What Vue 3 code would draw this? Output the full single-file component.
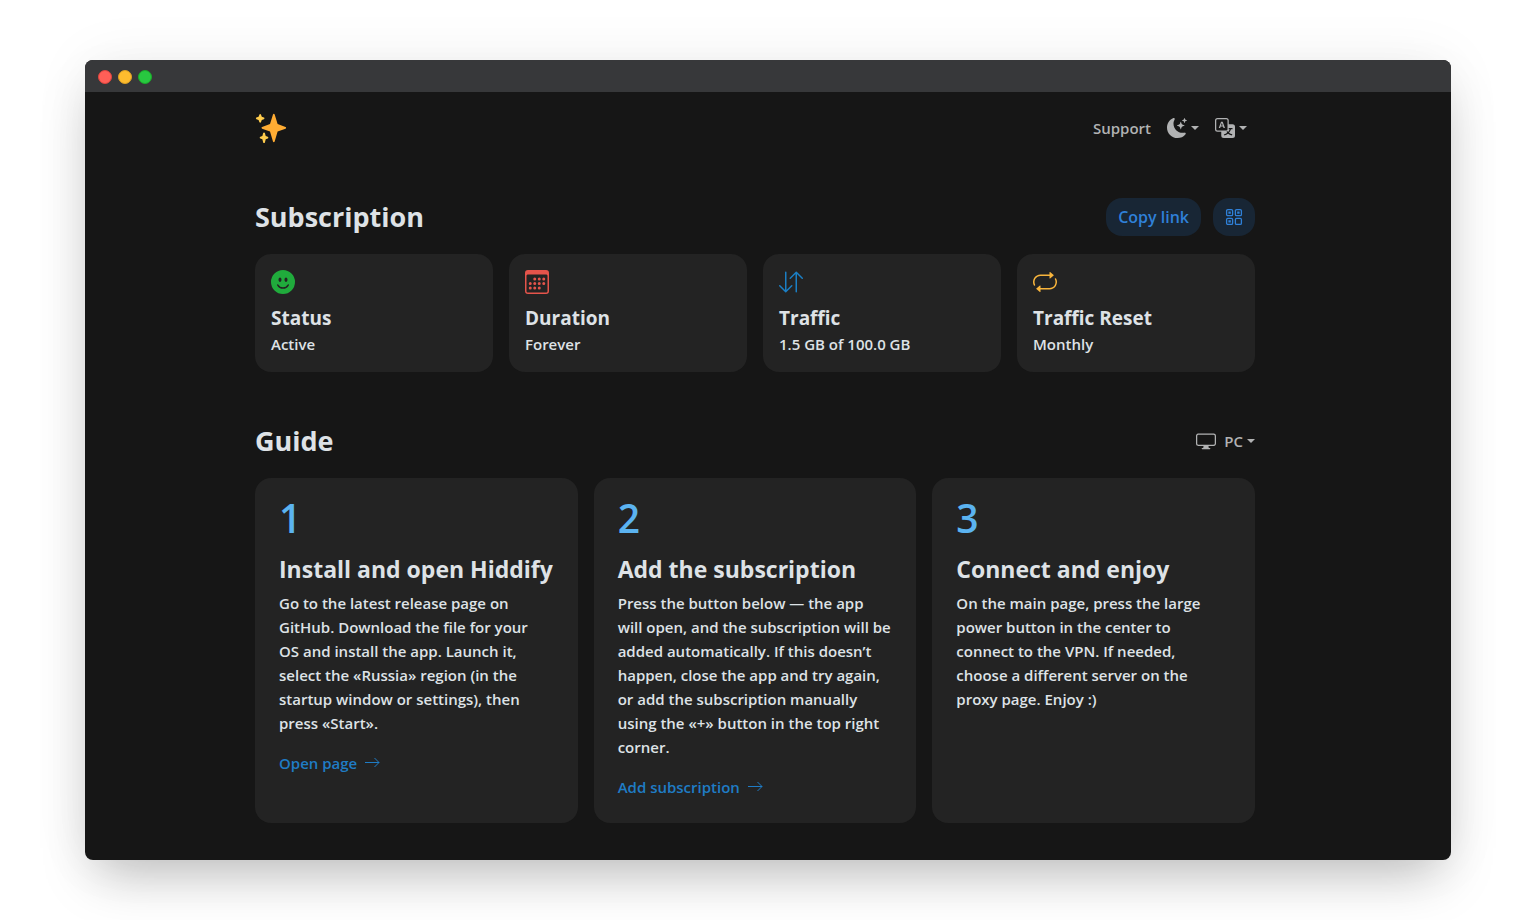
<script setup>
const stats = [
  {
    title: 'Status',
    value: 'Active',
    tone: 'green',
    paths: [
      'M8 16A8 8 0 1 0 8 0a8 8 0 0 0 0 16M7 6.5C7 7.328 6.552 8 6 8s-1-.672-1-1.5S5.448 5 6 5s1 .672 1 1.5M4.285 9.567a.5.5 0 0 1 .683.183A3.5 3.5 0 0 0 8 11.5a3.5 3.5 0 0 0 3.032-1.75.5.5 0 1 1 .866.5A4.5 4.5 0 0 1 8 12.5a4.5 4.5 0 0 1-3.898-2.25.5.5 0 0 1 .183-.683M10 8c-.552 0-1-.672-1-1.5S9.448 5 10 5s1 .672 1 1.5S10.552 8 10 8',
    ],
  },
  {
    title: 'Duration',
    value: 'Forever',
    tone: 'red',
    paths: [
      'M14 0H2a2 2 0 0 0-2 2v12a2 2 0 0 0 2 2h12a2 2 0 0 0 2-2V2a2 2 0 0 0-2-2M1 3.857C1 3.384 1.448 3 2 3h12c.552 0 1 .384 1 .857v10.286c0 .473-.448.857-1 .857H2c-.552 0-1-.384-1-.857z',
      'M6.5 7a1 1 0 1 0 0-2 1 1 0 0 0 0 2m3 0a1 1 0 1 0 0-2 1 1 0 0 0 0 2m3 0a1 1 0 1 0 0-2 1 1 0 0 0 0 2m-9 3a1 1 0 1 0 0-2 1 1 0 0 0 0 2m3 0a1 1 0 1 0 0-2 1 1 0 0 0 0 2m3 0a1 1 0 1 0 0-2 1 1 0 0 0 0 2m3 0a1 1 0 1 0 0-2 1 1 0 0 0 0 2m-9 3a1 1 0 1 0 0-2 1 1 0 0 0 0 2m3 0a1 1 0 1 0 0-2 1 1 0 0 0 0 2m3 0a1 1 0 1 0 0-2 1 1 0 0 0 0 2',
    ],
  },
  {
    title: 'Traffic',
    value: '1.5 GB of 100.0 GB',
    tone: 'blue',
    paths: [
      'M11.5 15a.5.5 0 0 0 .5-.5V2.707l3.146 3.147a.5.5 0 0 0 .708-.708l-4-4a.5.5 0 0 0-.708 0l-4 4a.5.5 0 1 0 .708.708L11 2.707V14.5a.5.5 0 0 0 .5.5m-7-14a.5.5 0 0 1 .5.5v11.793l3.146-3.147a.5.5 0 0 1 .708.708l-4 4a.5.5 0 0 1-.708 0l-4-4a.5.5 0 0 1 .708-.708L4 13.293V1.5a.5.5 0 0 1 .5-.5',
    ],
  },
  {
    title: 'Traffic Reset',
    value: 'Monthly',
    tone: 'amber',
    paths: [
      'M11 5.466V4H5a4 4 0 0 0-3.584 5.777.5.5 0 1 1-.896.446A5 5 0 0 1 5 3h6V1.534a.25.25 0 0 1 .41-.192l2.36 1.966c.12.1.12.284 0 .384l-2.36 1.966a.25.25 0 0 1-.41-.192m3.81.086a.5.5 0 0 1 .67.225A5 5 0 0 1 11 13H5v1.466a.25.25 0 0 1-.41.192l-2.36-1.966a.25.25 0 0 1 0-.384l2.36-1.966a.25.25 0 0 1 .41.192V12h6a4 4 0 0 0 3.585-5.777.5.5 0 0 1 .225-.67Z',
    ],
  },
]

const steps = [
  {
    title: 'Install and open Hiddify',
    text: 'Go to the latest release page on\nGitHub. Download the file for your\nOS and install the app. Launch it,\nselect the «Russia» region (in the\nstartup window or settings), then\npress «Start».',
    link: 'Open page',
  },
  {
    title: 'Add the subscription',
    text: 'Press the button below — the app\nwill open, and the subscription will be\nadded automatically. If this doesn’t\nhappen, close the app and try again,\nor add the subscription manually\nusing the «+» button in the top right\ncorner.',
    link: 'Add subscription',
  },
  {
    title: 'Connect and enjoy',
    text: 'On the main page, press the large\npower button in the center to\nconnect to the VPN. If needed,\nchoose a different server on the\nproxy page. Enjoy :)',
  },
]
</script>

<template>
  <div class="stage">
    <div class="window">
      <div class="titlebar">
        <span class="dot close"></span>
        <span class="dot minimise"></span>
        <span class="dot expand"></span>
      </div>
      <div class="page">
        <header class="topbar">
          <a href="#" class="logo" aria-label="Home">
            <svg width="32" height="32" viewBox="0 0 36 36" aria-hidden="true">
              <path fill="#ffac33" d="M34.347 16.893l-8.899-3.294-3.323-10.891c-.128-.42-.517-.708-.956-.708-.439 0-.828.288-.956.708l-3.322 10.891-8.9 3.294c-.393.146-.653.519-.653.938 0 .418.26.793.653.938l8.895 3.293 3.324 11.223c.126.424.516.715.959.715.442 0 .833-.291.959-.716l3.324-11.223 8.896-3.293c.391-.144.652-.518.652-.937 0-.418-.261-.792-.653-.938z" />
              <path fill="#ffcc4d" d="M14.347 27.894l-2.314-.856-.9-3.3c-.118-.436-.513-.738-.964-.738-.451 0-.846.302-.965.737l-.9 3.3-2.313.856c-.393.145-.653.519-.653.938 0 .418.26.793.653.938l2.301.853.907 3.622c.112.444.511.756.97.756.459 0 .858-.312.97-.757l.907-3.622 2.301-.853c.393-.144.653-.519.653-.937 0-.418-.26-.793-.653-.937zM10.009 6.231l-2.364-.875-.876-2.365c-.145-.393-.519-.653-.938-.653-.418 0-.792.26-.938.653l-.875 2.365-2.365.875c-.393.146-.653.52-.653.938 0 .418.26.793.653.938l2.365.875.875 2.365c.146.393.52.653.938.653.418 0 .792-.26.938-.653l.875-2.365 2.365-.875c.393-.146.653-.52.653-.938 0-.418-.26-.792-.653-.938z" />
            </svg>
          </a>
          <nav class="nav">
            <a href="#" class="nav-item">Support</a>
            <button type="button" class="nav-item" aria-label="Theme">
              <svg width="20" height="20" viewBox="0 0 16 16" fill="currentColor" aria-hidden="true">
                <path d="M6 .278a.77.77 0 0 1 .08.858 7.2 7.2 0 0 0-.878 3.46c0 4.021 3.278 7.277 7.318 7.277q.792-.001 1.533-.16a.79.79 0 0 1 .81.316.73.73 0 0 1-.031.893A8.35 8.35 0 0 1 8.344 16C3.734 16 0 12.286 0 7.71 0 4.266 2.114 1.312 5.124.06A.75.75 0 0 1 6 .278" />
                <path d="M10.794 3.148a.217.217 0 0 1 .412 0l.387 1.162c.173.518.579.924 1.097 1.097l1.162.387a.217.217 0 0 1 0 .412l-1.162.387a1.73 1.73 0 0 0-1.097 1.097l-.387 1.162a.217.217 0 0 1-.412 0l-.387-1.162A1.73 1.73 0 0 0 9.31 6.593l-1.162-.387a.217.217 0 0 1 0-.412l1.162-.387a1.73 1.73 0 0 0 1.097-1.097zM13.863.099a.145.145 0 0 1 .274 0l.258.774c.115.346.386.617.732.732l.774.258a.145.145 0 0 1 0 .274l-.774.258a1.16 1.16 0 0 0-.732.732l-.258.774a.145.145 0 0 1-.274 0l-.258-.774a1.16 1.16 0 0 0-.732-.732l-.774-.258a.145.145 0 0 1 0-.274l.774-.258c.346-.115.617-.386.732-.732z" />
              </svg>
              <span class="caret"></span>
            </button>
            <button type="button" class="nav-item" aria-label="Language">
              <svg width="20" height="20" viewBox="0 0 16 16" fill="currentColor" aria-hidden="true">
                <path d="M4.545 6.714 4.11 8H3l1.862-5h1.284L8 8H6.833l-.435-1.286zm1.634-.736L5.5 3.956h-.049l-.679 2.022z" />
                <path d="M0 2a2 2 0 0 1 2-2h7a2 2 0 0 1 2 2v3h3a2 2 0 0 1 2 2v7a2 2 0 0 1-2 2H7a2 2 0 0 1-2-2v-3H2a2 2 0 0 1-2-2zm2-1a1 1 0 0 0-1 1v7a1 1 0 0 0 1 1h7a1 1 0 0 0 1-1V2a1 1 0 0 0-1-1zm7.138 9.995q.289.451.63.846c-.748.575-1.673 1.001-2.768 1.292.178.217.451.635.555.867 1.125-.359 2.08-.844 2.886-1.494.777.665 1.739 1.165 2.93 1.472.133-.254.414-.673.629-.89-1.125-.253-2.057-.694-2.82-1.284.681-.747 1.222-1.651 1.621-2.757H14V8h-3v1.047h.765c-.318.844-.74 1.546-1.272 2.13a6 6 0 0 1-.415-.492 2 2 0 0 1-.94.31" />
              </svg>
              <span class="caret"></span>
            </button>
          </nav>
        </header>

        <section class="section">
          <div class="section-head">
            <h2>Subscription</h2>
            <div class="actions">
              <button type="button" class="pill">Copy link</button>
              <button type="button" class="pill" aria-label="Show QR code">
                <svg width="18" height="18" viewBox="0 0 18 18" fill="none" stroke="currentColor" aria-hidden="true">
                  <rect x="1.6" y="1.6" width="6" height="6" rx="1.2" stroke-width="1.3" />
                  <rect x="10.4" y="1.6" width="6" height="6" rx="1.2" stroke-width="1.3" />
                  <rect x="1.6" y="10.4" width="6" height="6" rx="1.2" stroke-width="1.3" />
                  <rect x="10.4" y="10.4" width="6" height="6" rx="1.2" stroke-width="1.3" />
                  <path d="M3.4 4.6h2.4M12.2 4.6h2.4M3.4 13.4h2.4" stroke-width="2.4" />
                </svg>
              </button>
            </div>
          </div>
          <div class="stats">
            <article v-for="stat in stats" :key="stat.title" class="card stat">
              <svg :class="stat.tone" width="24" height="24" viewBox="0 0 16 16" fill="currentColor" aria-hidden="true">
                <path v-for="d in stat.paths" :key="d" :d="d" />
              </svg>
              <h3>{{ stat.title }}</h3>
              <p>{{ stat.value }}</p>
            </article>
          </div>
        </section>

        <section class="section">
          <div class="section-head">
            <h2>Guide</h2>
            <button type="button" class="platform">
              <svg width="20" height="20" viewBox="0 0 16 16" fill="currentColor" aria-hidden="true">
                <path d="M0 4s0-2 2-2h12s2 0 2 2v6s0 2-2 2h-4q0 1 .25 1.5H11a.5.5 0 0 1 0 1H5a.5.5 0 0 1 0-1h.75Q6 13 6 12H2s-2 0-2-2zm1.398-.855a.76.76 0 0 0-.254.302A1.5 1.5 0 0 0 1 4.01V10c0 .325.078.502.145.602q.105.156.302.254a1.5 1.5 0 0 0 .538.143L2.01 11H14c.325 0 .502-.078.602-.145a.76.76 0 0 0 .254-.302 1.5 1.5 0 0 0 .143-.538L15 9.99V4c0-.325-.078-.502-.145-.602a.76.76 0 0 0-.302-.254A1.5 1.5 0 0 0 13.99 3H2c-.325 0-.502.078-.602.145" />
              </svg>
              <span class="platform-name">PC</span>
              <span class="caret"></span>
            </button>
          </div>
          <div class="steps">
            <article v-for="(step, index) in steps" :key="step.title" class="card step">
              <div class="number">{{ index + 1 }}</div>
              <h3>{{ step.title }}</h3>
              <p>{{ step.text }}</p>
              <a v-if="step.link" href="#" class="step-link">
                {{ step.link }}
                <svg width="15" height="12" viewBox="0 0 15 12" fill="none" stroke="currentColor" aria-hidden="true">
                  <path d="M0 5.5h14M9.5 1l4.5 4.5L9.5 10" />
                </svg>
              </a>
            </article>
          </div>
        </section>
      </div>
    </div>
  </div>
</template>

<style>
body {
  background: #fff;
}
</style>

<style scoped>
.stage {
  box-sizing: border-box;
  min-height: 100vh;
  padding: 60px 85px;
  display: flex;
  overflow: hidden;
  font-family: "Open Sans", "Noto Sans", sans-serif;
  font-size: 15px;
  font-weight: 600;
  line-height: 24px;
  color: #dee2e6;
}

.window {
  flex: 1;
  border-radius: 8px;
  background: #161616;
  box-shadow:
    0 25px 50px -12px rgba(0, 0, 0, 0.25),
    0 0 60px rgba(0, 0, 0, 0.06);
}

.titlebar {
  display: flex;
  align-items: center;
  gap: 6px;
  height: 32px;
  padding: 1px 13px 0;
  box-sizing: border-box;
  border-radius: 8px 8px 0 0;
  background: #37383a;
}

.dot {
  box-sizing: border-box;
  width: 14px;
  height: 14px;
  border-radius: 50%;
  border: 1px solid;
}

.close {
  background: #ff5f57;
  border-color: #e0443e;
}

.minimise {
  background: #febc2e;
  border-color: #dea123;
}

.expand {
  background: #28c840;
  border-color: #1aab29;
}

.page {
  max-width: 1000px;
  margin: 0 auto;
  padding: 0 26px 36px 0;
}

h2,
h3,
p {
  margin: 0;
}

a {
  text-decoration: none;
}

button {
  border: 0;
  padding: 0;
  background: none;
  font: inherit;
  cursor: pointer;
}

svg {
  display: block;
}

.topbar {
  display: flex;
  align-items: center;
  justify-content: space-between;
  height: 72px;
}

.nav {
  display: flex;
  align-items: center;
  gap: 16px;
  padding-right: 8px;
}

.nav-item,
.platform {
  display: flex;
  align-items: center;
  gap: 4px;
  color: #b1b2b3;
}

.platform-name {
  margin-left: 4px;
}

.caret {
  border: 4px solid transparent;
  border-top-color: currentColor;
  border-bottom: 0;
}

.section {
  padding-top: 34px;
}

.section + .section {
  padding-top: 50px;
}

.section-head {
  display: flex;
  align-items: center;
  justify-content: space-between;
  height: 38px;
  margin-bottom: 18px;
}

h2 {
  font-size: 27px;
  line-height: 36px;
  font-weight: 700;
}

.actions {
  display: flex;
  gap: 12px;
}

.pill {
  display: flex;
  align-items: center;
  height: 38px;
  padding: 0 12px;
  border-radius: 16px;
  background: #182635;
  color: #2f80d8;
  font-size: 16px;
}

.card {
  border-radius: 16px;
  background: #232323;
}

.stats {
  display: grid;
  grid-template-columns: repeat(4, 1fr);
  gap: 16px;
}

.stat {
  padding: 16px;
}

.stat h3 {
  margin: 12px 0 2px;
  font-size: 19px;
  line-height: 24px;
  font-weight: 700;
}

.green {
  color: #20ab3c;
}

.red {
  color: #e5544b;
}

.blue {
  color: #1b7fc4;
}

.amber {
  color: #f9b53c;
}

.steps {
  display: grid;
  grid-template-columns: repeat(3, 1fr);
  gap: 16px;
}

.step {
  padding: 24px;
}

.step p {
  white-space: pre-line;
}

.number {
  font-size: 39px;
  line-height: 32px;
  color: #5bb3f0;
}

.step h3 {
  margin: 21px 0 8px;
  font-size: 23px;
  line-height: 28px;
  font-weight: 700;
}

.step-link {
  display: inline-flex;
  align-items: center;
  gap: 8px;
  margin-top: 16px;
  color: #1f7cc5;
}
</style>
